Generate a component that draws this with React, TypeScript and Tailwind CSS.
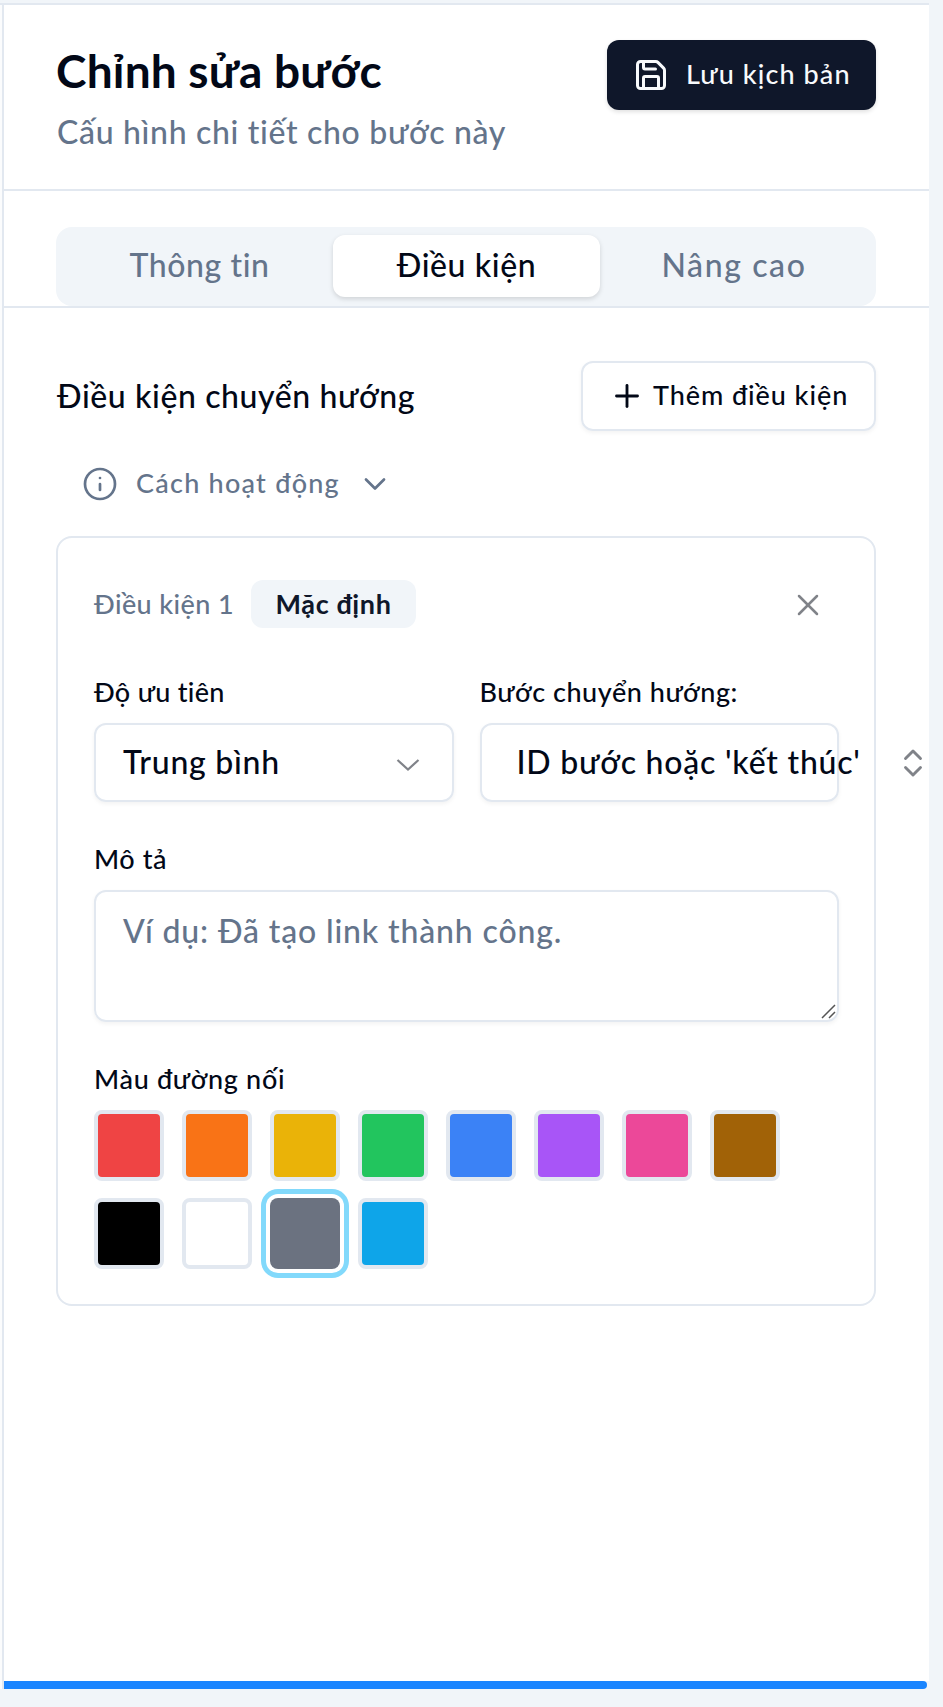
import React from "react";
import { ChevronDown, ChevronsUpDown, Info, Plus, Save, X } from "lucide-react";

const swatches = [
  "bg-[#ef4444]",
  "bg-[#f97316]",
  "bg-[#eab308]",
  "bg-[#22c55e]",
  "bg-[#3b82f6]",
  "bg-[#a855f7]",
  "bg-[#ec4899]",
  "bg-[#a16207]",
  "bg-black",
  "bg-white",
  "bg-[#6b7280]",
  "bg-[#0ea5e9]",
];
const selectedSwatch = 10;

function Header() {
  return (
    <header className="flex h-[186px] items-start justify-between border-b-2 border-[#e2e8f0] pt-[35px] pl-[52px] pr-[53px]">
      <div>
        <h1 className="mt-px h-[60px] text-[46px] leading-[60px] font-bold tracking-[0.2px] whitespace-nowrap">
          Chỉnh sửa bước
        </h1>
        <p className="mt-[11px] h-10 pl-px text-[32px] leading-10 tracking-[0.68px] whitespace-nowrap text-[#64748b]">
          Cấu hình chi tiết cho bước này
        </p>
      </div>
      <button className="flex h-[70px] w-[269px] items-center rounded-xl bg-[#0f172a] pl-[26px] text-[#f8fafc] shadow-[0_2px_4px_rgba(0,0,0,0.12)]">
        <Save size={36} strokeWidth={2} />
        <span className="ml-[17px] pb-px text-[27px] tracking-[1.1px] whitespace-nowrap">Lưu kịch bản</span>
      </button>
    </header>
  );
}

function Tabs() {
  return (
    <nav className="h-[117px] border-b-2 border-[#e2e8f0] pt-9 pl-[52px] pr-[53px]">
      <div className="grid h-[79px] grid-cols-3 rounded-2xl bg-[#f1f5f9] pt-2 pr-2 pb-[9px] pl-2 text-[32px] text-[#64748b]">
        <button className="pb-[3px] pl-[3px] tracking-[0.6px]">Thông tin</button>
        <button className="ml-px rounded-xl bg-white pb-[3px] tracking-[0.6px] text-[#020817] shadow-[0_2px_5px_rgba(0,0,0,0.14)]">
          Điều kiện
        </button>
        <button className="pb-[3px] tracking-[1.6px]">Nâng cao</button>
      </div>
    </nav>
  );
}

function ConditionCard() {
  return (
    <section className="mt-[33px] h-[770px] rounded-2xl border-2 border-[#e2e8f0] pr-[35px] pl-9 pt-[42px]">
      <div className="flex h-12 items-center">
        <span className="text-[27px] tracking-[0.4px] whitespace-nowrap text-[#64748b]">Điều kiện 1</span>
        <span className="ml-[17px] flex h-12 w-[165px] items-center justify-center rounded-xl bg-[#f1f5f9] text-[27px] font-bold tracking-[0.6px] text-[#0f172a]">
          Mặc định
        </span>
        <button className="ml-auto mr-[13px] pt-px text-[#808389]">
          <X size={36} strokeWidth={1.7} />
        </button>
      </div>

      <div className="mt-[43px] grid grid-cols-2 gap-[26px]">
        <div>
          <label className="block h-10 pt-px text-[27px] leading-10 tracking-[0.3px]">Độ ưu tiên</label>
          <button className="mt-3 flex h-[79px] w-full items-center justify-between rounded-xl border-2 border-[#e2e8f0] pl-[27px] pr-8 text-[32px] shadow-[0_2px_4px_rgba(0,0,0,0.05)]">
            <span className="pb-px tracking-[0.75px] whitespace-nowrap">Trung bình</span>
            <svg className="mt-1 h-4 w-6" viewBox="0 0 24 16" fill="none" stroke="#808389" strokeWidth="2.2">
              <path d="M1.5 3 12 12.5 22.5 3" />
            </svg>
          </button>
        </div>
        <div>
          <label className="block h-10 pt-px text-[27px] leading-10 tracking-[0.55px] whitespace-nowrap">Bước chuyển hướng:</label>
          <button className="mt-3 flex h-[79px] w-full items-center rounded-xl border-2 border-[#e2e8f0] pl-[35px] text-[32px] shadow-[0_2px_4px_rgba(0,0,0,0.05)]">
            <span className="w-[345px] shrink-0 pb-px text-left tracking-[0.78px] whitespace-nowrap">ID bước hoặc 'kết thúc'</span>
            <ChevronsUpDown className="ml-[33px] shrink-0 text-[#808389]" size={36} strokeWidth={1.9} />
          </button>
        </div>
      </div>

      <label className="mt-9 block h-10 pt-px text-[27px] leading-10 tracking-[0.6px]">Mô tả</label>
      <div className="relative mt-3 h-[132px] rounded-xl border-2 border-[#e2e8f0] pt-[19px] pl-[27px] shadow-[0_2px_4px_rgba(0,0,0,0.05)]">
        <p className="text-[32px] leading-10 tracking-[0.85px] whitespace-nowrap text-[#64748b]">
          Ví dụ: Đã tạo link thành công.
        </p>
        <svg
          className="absolute right-px bottom-px h-[15px] w-[15px]"
          viewBox="0 0 15 15"
          stroke="#555"
          strokeWidth="1.5"
        >
          <path d="M1 14 14 1M8 14l6-6" />
        </svg>
      </div>

      <p className="mt-9 h-10 pt-px text-[27px] leading-10 tracking-[0.7px]">Màu đường nối</p>
      <div className="mt-3 grid grid-cols-[repeat(8,70px)] gap-x-[18px] gap-y-[17px]">
        {swatches.map((color, i) => (
          <button
            key={color}
            className={
              i === selectedSwatch
                ? `h-[71px] rounded-lg ${color} shadow-[0_0_0_4px_#fff,0_0_0_9px_#82d9fb]`
                : `h-[71px] rounded-lg border-4 border-[#e2e8f0] ${color}`
            }
          />
        ))}
      </div>
    </section>
  );
}

export default function App() {
  return (
    <div className="h-[1707px] w-[943px] overflow-hidden bg-[#f1f5f9] pt-[3px] font-['Lato','Noto_Sans',sans-serif] font-medium text-[#020817]">
      <div className="h-[1686px] w-[929px] border-t-2 border-[#e2e8f0] bg-[#fbfcfd] pl-0.5">
        <main className="flex h-[1684px] flex-col border-l-2 border-[#e2e8f0] bg-white">
          <Header />
          <Tabs />
          <div className="flex-1 pt-[53px] pl-[52px] pr-[53px]">
            <div className="flex h-[70px] items-center justify-between">
              <h2 className="pb-px pl-px text-[32px] tracking-[0.6px] whitespace-nowrap">Điều kiện chuyển hướng</h2>
              <button className="flex h-[70px] w-[295px] items-center rounded-xl border-2 border-[#e2e8f0] pl-[26px] shadow-[0_2px_4px_rgba(0,0,0,0.05)]">
                <Plus size={36} strokeWidth={1.9} />
                <span className="ml-2 pb-px text-[27px] tracking-[0.93px] whitespace-nowrap">Thêm điều kiện</span>
              </button>
            </div>
            <div className="mt-[34px] flex h-[38px] items-center pl-[26px] text-[#64748b]">
              <Info size={36} strokeWidth={1.8} />
              <span className="ml-[18px] w-[203px] pb-px text-[27px] tracking-[1.25px] whitespace-nowrap">Cách hoạt động</span>
              <ChevronDown className="ml-[18px]" size={36} strokeWidth={1.8} />
            </div>
            <ConditionCard />
          </div>
          <div className="flex h-2 bg-[#f1f5f9] pr-0.5">
            <div className="flex-1 rounded-r-full bg-[#1a85ff]" />
          </div>
        </main>
      </div>
    </div>
  );
}
